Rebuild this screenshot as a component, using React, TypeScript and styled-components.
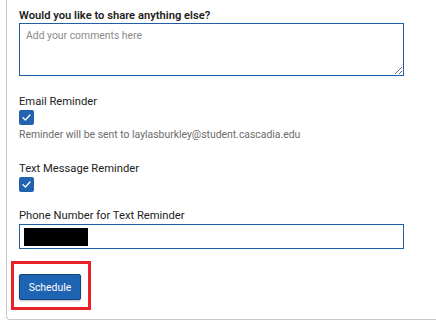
import styled, { createGlobalStyle } from "styled-components"

const Global = createGlobalStyle`
  body {
    margin: 0;
    background: #ffffff;
    font-family: Roboto, "Liberation Sans", Arial, sans-serif;
    color: #222;
  }
`

const Card = styled.div`
  margin-left: 6px;
  width: 430px;
  border-left: 1px solid #c8c8c8;
  border-bottom: 1px solid #c8c8c8;
  border-bottom-left-radius: 4px;
  padding: 8px 0 9px 12px;
  box-sizing: border-box;`

const Field = styled.div<{$gap?: number}>`
  display: flex;
  flex-direction: column;
  margin-top: ${props => props.$gap ?? 0}px;`

const Label = styled.label<{$strong?: boolean}>`
  font-size: 11.2px;
  line-height: 15px;
  font-weight: ${props => props.$strong ? 600 : 400};
  color: #222;`

const TextArea = styled.textarea`
  width: 385px;
  height: 53px;
  box-sizing: border-box;
  border: 1px solid #1e5fa6;
  border-radius: 0;
  padding: 5px 6px;
  font-family: Roboto, "Liberation Sans", Arial, sans-serif;
  font-size: 10.4px;
  resize: vertical;
  outline: none;
  display: block;
  &::placeholder { color: #8a8a8a; }`

const Input = styled.div`
  width: 385px;
  height: 25px;
  margin-top: 1px;
  box-sizing: border-box;
  border: 1px solid #1e5fa6;
  padding: 2px 4px;
  display: flex;
  align-items: center;`

const Redacted = styled.div`
  width: 64px;
  height: 18px;
  background: #000;`

const Box = styled.span`
  width: 15px;
  height: 15px;
  margin-top: 1px;
  border-radius: 2px;
  background: #2262ae;
  display: flex;
  align-items: center;
  justify-content: center;`

const Hint = styled.div`
  font-size: 10.4px;
  line-height: 14px;
  color: #6b6b6b;
  margin-top: 3px;`

const Highlight = styled.div`
  margin: 12px 0 0 -8px;
  width: 62px;
  border: 3px solid #ea2128;
  padding: 10px 7px 7px 5px;
  box-sizing: content-box;`

const Button = styled.button`
  width: 62px;
  height: 26px;
  background: #1f63b3;
  color: #fff;
  border: 1px solid #15477f;
  border-radius: 2px;
  box-shadow: 0 1px 2px rgba(0,0,0,0.25);
  font-family: Roboto, "Liberation Sans", Arial, sans-serif;
  font-size: 10.4px;
  padding: 0;`

const Check = () => (
  <Box>
    <svg width="11" height="11" viewBox="0 0 11 11">
      <path d="M2 5.8 L4.4 8 L9 3" fill="none" stroke="#fff" strokeWidth="1.3" strokeLinecap="round" strokeLinejoin="round" />
    </svg>
  </Box>
)

export default function App() {
  return (
    <>
      <Global />
      <Card>
        <Field>
          <Label $strong>Would you like to share anything else?</Label>
          <TextArea placeholder="Add your comments here" />
        </Field>
        <Field $gap={18}>
          <Label>Email Reminder</Label>
          <Check />
          <Hint>Reminder will be sent to laylasburkley@student.cascadia.edu</Hint>
        </Field>
        <Field $gap={19}>
          <Label>Text Message Reminder</Label>
          <Check />
        </Field>
        <Field $gap={16}>
          <Label>Phone Number for Text Reminder</Label>
          <Input><Redacted /></Input>
        </Field>
        <Highlight>
          <Button>Schedule</Button>
        </Highlight>
      </Card>
    </>
  )
}
